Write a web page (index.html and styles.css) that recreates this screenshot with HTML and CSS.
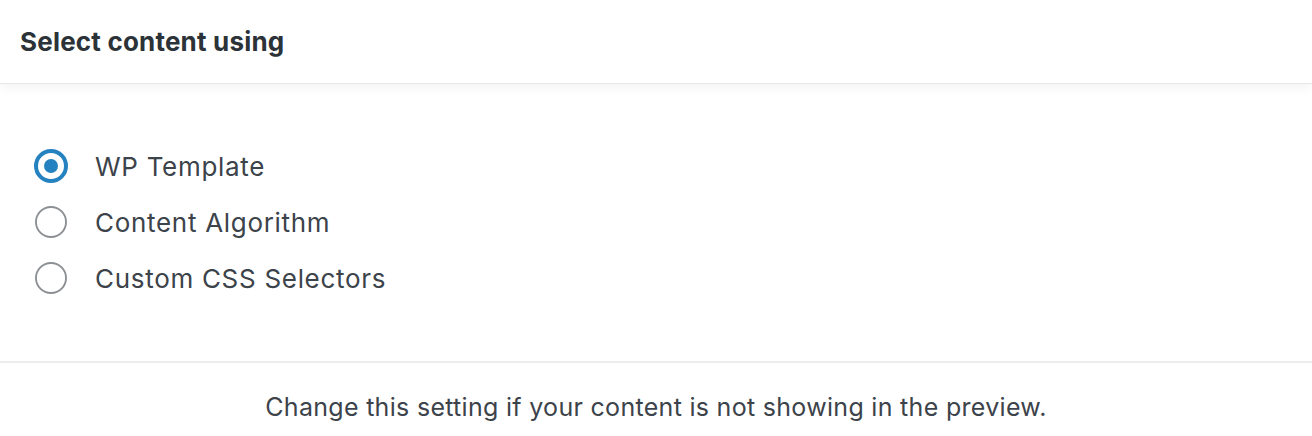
FILE: index.html
```html
<!DOCTYPE html>
<html lang="en">
<head>
<meta charset="utf-8">
<title>Select content using</title>
<link rel="stylesheet" href="styles.css">
</head>
<body>
<div class="panel">
  <header class="panel-header">
    <h2 class="panel-title">Select content using</h2>
  </header>
  <div class="panel-body">
    <label class="option">
      <input type="radio" name="mode" class="radio" checked>
      <span class="option-label">WP Template</span>
    </label>
    <label class="option">
      <input type="radio" name="mode" class="radio">
      <span class="option-label">Content Algorithm</span>
    </label>
    <label class="option">
      <input type="radio" name="mode" class="radio">
      <span class="option-label">Custom CSS Selectors</span>
    </label>
  </div>
  <footer class="panel-footer">
    <p class="hint">Change this setting if your content is not showing in the preview.</p>
  </footer>
</div>
</body>
</html>
```
FILE: styles.css
```css
* { box-sizing: border-box; }
html, body {
  margin: 0;
  padding: 0;
  background: #fff;
}
body {
  font-family: Inter, "Liberation Sans", sans-serif;
  color: #3c434a;
}
.panel {
  width: 1312px;
  height: 436px;
  display: flex;
  flex-direction: column;
}
.panel-header {
  height: 83px;
  padding: 0 20px;
  display: flex;
  align-items: center;
  box-shadow: 0 1px 0 #e8e8e8, 0 2px 12px rgba(0,0,0,0.07);
  position: relative;
  z-index: 1;
  background: #fff;
}
.panel-title {
  margin: 0;
  font-size: 26px;
  line-height: 32px;
  font-weight: 700;
  color: #2c3338;
  letter-spacing: 0.2px;
}
.panel-body {
  padding: 66px 34px 0;
  height: 280px;
  display: flex;
  flex-direction: column;
  gap: 22px;
  border-bottom: 2px solid #ececec;
}
.option {
  display: flex;
  align-items: center;
  gap: 27px;
  height: 34px;
  cursor: pointer;
}
.radio {
  appearance: none;
  -webkit-appearance: none;
  margin: 0;
  width: 34px;
  height: 34px;
  border-radius: 50%;
  border: 2px solid #8c8f94;
  background: #fff;
  display: grid;
  place-items: center;
  flex: none;
  transform: scale(0.94);
}
.radio:checked {
  border: 4px solid #2582c0;
  transform: none;
}
.radio:checked::before {
  content: "";
  width: 14px;
  height: 14px;
  border-radius: 50%;
  background: #2582c0;
}
.option-label {
  font-size: 26px;
  line-height: 34px;
  letter-spacing: 0.7px;
  color: #3c434a;
  padding-top: 2px;
}
.panel-footer {
  flex: 1;
  display: flex;
  align-items: flex-start;
  justify-content: center;
  padding-top: 29px;
}
.hint {
  margin: 0;
  font-size: 25px;
  line-height: 30px;
  letter-spacing: 0.3px;
  color: #3c434a;
}
```
